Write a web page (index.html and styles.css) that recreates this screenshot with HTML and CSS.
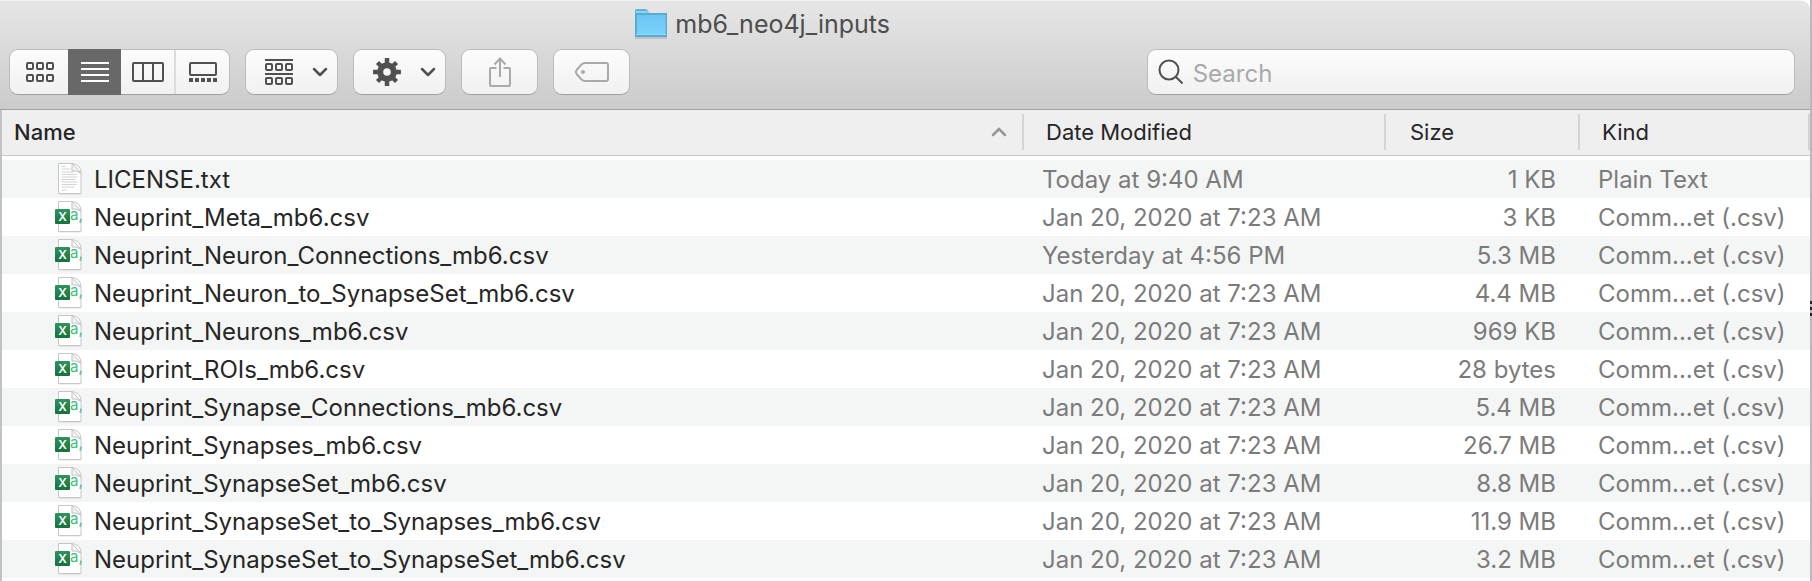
FILE: index.html
```html
<!DOCTYPE html>
<html lang="en">
<head>
<meta charset="utf-8">
<title>mb6_neo4j_inputs</title>
<link rel="stylesheet" href="styles.css">
</head>
<body>
<svg class="defs" aria-hidden="true">
  <defs>
    <linearGradient id="green" x1="0" y1="0" x2="0" y2="1"><stop offset="0" stop-color="#33935f"/><stop offset="1" stop-color="#14733c"/></linearGradient>
    <linearGradient id="blue" x1="0" y1="0" x2="0" y2="1"><stop offset="0" stop-color="#6ac6f2"/><stop offset="1" stop-color="#7ad2fb"/></linearGradient>
    <symbol id="sheet" viewBox="0 0 30 34">
      <path d="M5 2h14l8 8v21.500h-22z" fill="#000" opacity=".12" transform="translate(0 1)"/>
      <path d="M4.500 1.500h13.500q9 1 9 9.500v20.500h-22.500z" fill="#fff" stroke="#c6c6c6"/>
      <path d="M18 1.500l0 7.500q3 -1 9 2z" fill="#f4f4f4" stroke="#c2c2c2"/>
    </symbol>
    <symbol id="txt" viewBox="0 0 30 34">
      <use href="#sheet"/>
      <path d="M7.500 4.500h4M7.500 7h9M7.500 10h12M7.500 12.500h15M7.500 15h16M7.500 17.500h14M7.500 20h16M7.500 22.500h15M7.500 25h13M7.500 28h5" stroke="#d2d2d2" stroke-width="1" fill="none"/>
    </symbol>
    <symbol id="csv" viewBox="0 0 30 34">
      <use href="#sheet"/>
      <text x="16" y="20" class="csv-a">a,</text>
      <rect x="1" y="9" width="15" height="15" rx="1" fill="url(#green)"/>
      <text x="8.500" y="21" class="csv-x">X</text>
    </symbol>
    <symbol id="chevron" viewBox="0 0 16 10"><path d="M2 2l6 6 6-6" fill="none" stroke="currentColor" stroke-width="2.500" stroke-linecap="round" stroke-linejoin="round"/></symbol>
  </defs>
</svg>
<main class="window">
  <header class="toolbar">
    <h1 class="title">
      <svg class="folder" viewBox="0 0 32 30" aria-hidden="true">
        <path d="M0 27h32v3h-32z" fill="#000" opacity=".12"/>
        <path d="M0 2q0-2 2-2h8q2 0 3 2l1 2h18v8h-32z" fill="#5ab3dd"/>
        <path d="M1 2h11l2 2h-13z" fill="#8ed4f5"/>
        <path d="M0 4h32v24h-32z" fill="#58acd4"/>
        <path d="M2 6h28.500v19h-28.500z" fill="url(#blue)"/>
        <path d="M1 25h30v1h-30z" fill="#8bdcff"/>
      </svg>
      <span>mb6_neo4j_inputs</span>
    </h1>
    <div class="controls">
      <div class="segments" role="group" aria-label="View">
        <button class="segment" aria-label="Icons"><svg width="28" height="20" viewBox="0 0 28 20"><g class="line"><rect x="1" y="1" width="6" height="6" rx="1"/><rect x="11" y="1" width="6" height="6" rx="1"/><rect x="21" y="1" width="6" height="6" rx="1"/><rect x="1" y="13" width="6" height="6" rx="1"/><rect x="11" y="13" width="6" height="6" rx="1"/><rect x="21" y="13" width="6" height="6" rx="1"/></g></svg></button>
        <button class="segment selected" aria-label="List" aria-pressed="true"><svg width="28" height="20" viewBox="0 0 28 20"><path class="line" d="M0 1h28M0 7h28M0 13h28M0 19h28"/></svg></button>
        <button class="segment" aria-label="Columns"><svg width="32" height="20" viewBox="0 0 32 20"><g class="line"><rect x="1" y="1" width="30" height="18" rx="1"/><path d="M11 1v18M21 1v18"/></g></svg></button>
        <button class="segment divided" aria-label="Gallery"><svg width="28" height="20" viewBox="0 0 28 20"><rect class="line" x="1" y="1" width="26" height="12" rx="1"/><path d="M0 16h4v4H0zM6 16h4v4H6zM12 16h4v4h-4zM18 16h4v4h-4zM24 16h4v4h-4z" fill="currentColor"/></svg></button>
      </div>
      <button class="button menu" aria-label="Group by"><svg width="28" height="26" viewBox="0 0 28 26"><g class="line"><path d="M0 1h28M0 15h28"/><rect x="1" y="5" width="6" height="6" rx="1"/><rect x="11" y="5" width="6" height="6" rx="1"/><rect x="21" y="5" width="6" height="6" rx="1"/><rect x="1" y="19" width="6" height="6" rx="1"/><rect x="11" y="19" width="6" height="6" rx="1"/><rect x="21" y="19" width="6" height="6" rx="1"/></g></svg><svg width="16" height="10"><use href="#chevron"/></svg></button>
      <button class="button menu" aria-label="Action"><svg width="28" height="28" viewBox="-14 -14 28 28"><path d="M0-13.900V-8M0 13.900V8M-13.900 0H-8M13.900 0H8M-9.500-9.500L-6-6M9.500 9.500L6 6M-9.500 9.500L-6 6M9.500-9.500L6-6" stroke="currentColor" stroke-width="4.500"/><circle r="6.800" fill="none" stroke="currentColor" stroke-width="6"/></svg><svg width="16" height="10"><use href="#chevron"/></svg></button>
      <button class="button faint" aria-label="Share"><svg width="22" height="30" viewBox="0 0 22 30"><path class="line" d="M7.500 11H2q-1 0-1 1v16q0 1 1 1h18q1 0 1-1V12q0-1-1-1h-5.500M11 20V2M5.500 7.500L11 1.500l5.500 6"/></svg></button>
      <button class="button faint" aria-label="Edit tags"><svg width="34" height="20" viewBox="0 0 34 20"><path class="line" d="M10 1h21q2 0 2 2v14q0 2-2 2H10q-2 0-3.500-1.500L2 12.500q-2-2.500 0-5L6.500 2.500Q8 1 10 1z"/><circle cx="8" cy="10" r="2" fill="currentColor"/></svg></button>
      <label class="search"><svg width="26" height="26" viewBox="0 0 26 26" aria-hidden="true"><g class="line"><circle cx="11" cy="11" r="9.500"/><path d="M17.500 17.500l7 7"/></g></svg><input type="search" placeholder="Search" aria-label="Search"></label>
    </div>
  </header>
  <div class="content">
    <table class="files">
      <colgroup><col><col class="col-date"><col class="col-size"><col class="col-kind"></colgroup>
      <thead>
        <tr>
          <th scope="col" class="sorted" aria-sort="ascending"><div class="head"><span>Name</span><svg width="16" height="10" viewBox="0 0 16 10" aria-hidden="true"><path d="M2 8l6-6 6 6" fill="none" stroke="#969696" stroke-width="2.500" stroke-linecap="round"/></svg></div></th>
          <th scope="col"><div class="head">Date Modified</div></th>
          <th scope="col"><div class="head">Size</div></th>
          <th scope="col"><div class="head">Kind</div></th>
        </tr>
      </thead>
      <tbody>
        <tr><td><div class="file"><svg class="icon"><use href="#txt"/></svg><span>LICENSE.txt</span></div></td><td>Today at 9:40 AM</td><td>1 KB</td><td>Plain Text</td></tr>
        <tr><td><div class="file"><svg class="icon"><use href="#csv"/></svg><span>Neuprint_Meta_mb6.csv</span></div></td><td>Jan 20, 2020 at 7:23 AM</td><td>3 KB</td><td>Comm...et (.csv)</td></tr>
        <tr><td><div class="file"><svg class="icon"><use href="#csv"/></svg><span>Neuprint_Neuron_Connections_mb6.csv</span></div></td><td>Yesterday at 4:56 PM</td><td>5.3 MB</td><td>Comm...et (.csv)</td></tr>
        <tr><td><div class="file"><svg class="icon"><use href="#csv"/></svg><span>Neuprint_Neuron_to_SynapseSet_mb6.csv</span></div></td><td>Jan 20, 2020 at 7:23 AM</td><td>4.4 MB</td><td>Comm...et (.csv)</td></tr>
        <tr><td><div class="file"><svg class="icon"><use href="#csv"/></svg><span>Neuprint_Neurons_mb6.csv</span></div></td><td>Jan 20, 2020 at 7:23 AM</td><td>969 KB</td><td>Comm...et (.csv)</td></tr>
        <tr><td><div class="file"><svg class="icon"><use href="#csv"/></svg><span>Neuprint_ROIs_mb6.csv</span></div></td><td>Jan 20, 2020 at 7:23 AM</td><td>28 bytes</td><td>Comm...et (.csv)</td></tr>
        <tr><td><div class="file"><svg class="icon"><use href="#csv"/></svg><span>Neuprint_Synapse_Connections_mb6.csv</span></div></td><td>Jan 20, 2020 at 7:23 AM</td><td>5.4 MB</td><td>Comm...et (.csv)</td></tr>
        <tr><td><div class="file"><svg class="icon"><use href="#csv"/></svg><span>Neuprint_Synapses_mb6.csv</span></div></td><td>Jan 20, 2020 at 7:23 AM</td><td>26.7 MB</td><td>Comm...et (.csv)</td></tr>
        <tr><td><div class="file"><svg class="icon"><use href="#csv"/></svg><span>Neuprint_SynapseSet_mb6.csv</span></div></td><td>Jan 20, 2020 at 7:23 AM</td><td>8.8 MB</td><td>Comm...et (.csv)</td></tr>
        <tr><td><div class="file"><svg class="icon"><use href="#csv"/></svg><span>Neuprint_SynapseSet_to_Synapses_mb6.csv</span></div></td><td>Jan 20, 2020 at 7:23 AM</td><td>11.9 MB</td><td>Comm...et (.csv)</td></tr>
        <tr><td><div class="file"><svg class="icon"><use href="#csv"/></svg><span>Neuprint_SynapseSet_to_SynapseSet_mb6.csv</span></div></td><td>Jan 20, 2020 at 7:23 AM</td><td>3.2 MB</td><td>Comm...et (.csv)</td></tr>
      </tbody>
    </table>
  </div>
  <span class="edge-mark" aria-hidden="true"></span>
</main>
</body>
</html>
```
FILE: styles.css
```css
* { box-sizing: border-box; }
body {
  margin: 0;
  background: #fff;
  color: #262626;
  font: 24px/38px Inter, "Liberation Sans", sans-serif;
}
.defs { position: absolute; width: 0; height: 0; }
.window {
  position: relative;
  display: flex;
  flex-direction: column;
  min-height: 100vh;
  border-right: 2px solid #b9b9bb;
}
/* Sliver of the window behind, visible past the right border */
.edge-mark {
  position: absolute;
  top: 301px;
  right: -2px;
  width: 2px;
  height: 15px;
  background: repeating-linear-gradient(#222 0 3px, #b9b9bb 3px 6px);
}
.toolbar {
  display: flex;
  flex-direction: column;
  gap: 3px;
  padding-bottom: 14px;
  background: linear-gradient(#e6e6e6, #cbcbcb);
  border-top: 1px solid #f4f4f4;
  border-bottom: 1px solid #a3a3a3;
  border-top-right-radius: 9px;
}
.title {
  display: flex;
  align-items: center;
  gap: 8px;
  height: 45px;
  margin: 0;
  padding-left: 35.1%;
  color: #4d4d4d;
  font-size: 25px;
  font-weight: 400;
}
.folder { width: 32px; height: 30px; }
.controls { display: flex; gap: 15px; padding: 0 15px 0 9px; }
.segments, .button, .search {
  height: 46px;
  border: 1px solid #bdbdbd;
  border-bottom-color: #a0a0a0;
  border-radius: 9px;
  background: linear-gradient(#fcfcfc, #f1f1f1);
}
.segments { display: flex; width: 221px; }
.segment {
  display: flex;
  flex: 0 0 53px;
  align-items: center;
  justify-content: center;
  padding: 0;
  border: 0;
  background: none;
  color: #505050;
}
.segment:first-child { flex-basis: 58px; padding-left: 2px; }
.segment.selected { margin: -1px 0; background: #686868; color: #fff; }
.segment.divided { flex: 1; border-left: 2px solid #dcdcdc; }
.button {
  display: flex;
  align-items: center;
  justify-content: center;
  width: 77px;
  padding: 0;
  color: #505050;
}
.menu { justify-content: space-between; width: 93px; padding: 0 9px 0 19px; }
.faint { color: #a9a9a9; }
.line { fill: none; stroke: currentColor; stroke-width: 2; }
.search {
  display: flex;
  align-items: center;
  gap: 9px;
  width: 36.3%;
  margin-left: auto;
  padding-left: 10px;
  color: #505050;
}
.search input {
  flex: 1;
  min-width: 0;
  height: 44px;
  padding: 2px 0 0;
  border: 0;
  outline: 0;
  background: none;
  font: inherit;
}
.search input::placeholder { color: #a9a9a9; opacity: 1; }
.content { flex: 1; border-left: 2px solid #c1c2c6; }
.files {
  width: 100%;
  border-collapse: separate;
  border-spacing: 0;
  table-layout: fixed;
}
.col-date { width: 362px; }
.col-size { width: 194px; }
.col-kind { width: 230px; }
th {
  height: 46px;
  padding: 4px 0 5px;
  border-bottom: 1px solid #c8c8c8;
  background: #efefef;
  font-size: 22px;
  font-weight: 400;
  line-height: 36px;
  text-align: left;
}
.head {
  display: flex;
  align-items: center;
  justify-content: space-between;
  height: 36px;
  padding: 0 15px 0 22px;
  border-right: 2px solid #d4d4d4;
}
th:nth-child(3) .head { padding-left: 24px; }
.sorted { font-weight: 500; }
.sorted .head { padding-left: 12px; }
td { height: 38px; padding: 2px 18px 0; color: #7b7b7b; line-height: 36px; white-space: nowrap; }
td:first-child { padding: 0 0 0 52px; color: #262626; }
td:nth-child(3) { padding-right: 24px; text-align: right; }
tbody::before { content: ""; display: table-row; height: 4px; }
tbody tr:nth-child(odd) td { background: #f4f6f5; }
.file { display: flex; align-items: center; gap: 10px; height: 38px; }
.file span { padding-top: 2px; }
.icon { width: 30px; height: 34px; }
.csv-a { fill: #39c27d; font: 15px Inter, sans-serif; }
.csv-x { fill: #fff; font: 600 12px Inter, sans-serif; text-anchor: middle; }
```
